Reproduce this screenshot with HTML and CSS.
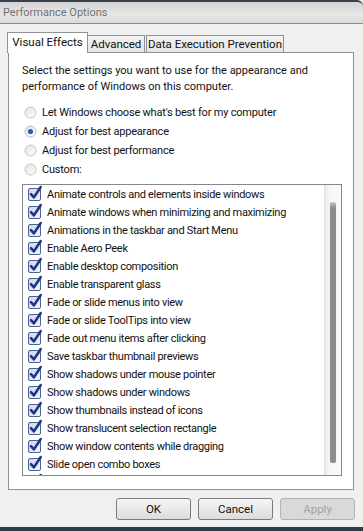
FILE: index.html
```html
<!DOCTYPE html>
<html lang="en">
<head>
  <meta charset="UTF-8" />
  <title>Performance Options</title>
  <link rel="stylesheet" href="styles.css">
</head>
<body>
  <svg class="defs" width="0" height="0">
    <defs>
      <linearGradient id="boxFill" x1="0" y1="0" x2="1" y2="1">
        <stop offset="0" stop-color="#c9d6ec"/>
        <stop offset="1" stop-color="#f4f7fc"/>
      </linearGradient>
      <linearGradient id="radioFill" x1="0" y1="0" x2="1" y2="1">
        <stop offset="0" stop-color="#e2e2e2"/>
        <stop offset="1" stop-color="#ffffff"/>
      </linearGradient>
      <symbol id="chk" viewBox="0 0 16 16">
        <rect x="1.5" y="3.5" width="12" height="12" rx="1.5" fill="url(#boxFill)" stroke="#4e6390"/>
        <path d="M4 9.2 L6.9 12.4 L13.6 2.2" fill="none" stroke="#1c3585" stroke-width="2.6" stroke-linecap="round" stroke-linejoin="round"/>
      </symbol>
      <symbol id="rad" viewBox="0 0 13 13">
        <circle cx="6.5" cy="6.5" r="5.5" fill="url(#radioFill)" stroke="#c4c4c4"/>
      </symbol>
      <symbol id="radOn" viewBox="0 0 13 13">
        <circle cx="6.5" cy="6.5" r="5.5" fill="url(#radioFill)" stroke="#b4bccb"/>
        <circle cx="6.5" cy="6.5" r="2.6" fill="#2a5db6"/>
      </symbol>
    </defs>
  </svg>

  <div class="window">
    <div class="titlebar">Performance Options</div>

    <div class="dialog">
      <div class="tabs">
        <div class="tab active">Visual Effects</div>
        <div class="tab adv">Advanced</div>
        <div class="tab dep">Data Execution Prevention</div>
      </div>

      <div class="panel">
        <p class="intro">Select the settings you want to use for the appearance and<br>performance of Windows on this computer.</p>

        <div class="radios">
          <div class="radio"><svg class="rbtn"><use href="#rad"/></svg>Let Windows choose what's best for my computer</div>
          <div class="radio"><svg class="rbtn"><use href="#radOn"/></svg>Adjust for best appearance</div>
          <div class="radio"><svg class="rbtn"><use href="#rad"/></svg>Adjust for best performance</div>
          <div class="radio"><svg class="rbtn"><use href="#rad"/></svg>Custom:</div>
        </div>

        <div class="listbox">
          <ul class="items">
            <li><svg class="cbox"><use href="#chk"/></svg>Animate controls and elements inside windows</li>
            <li><svg class="cbox"><use href="#chk"/></svg>Animate windows when minimizing and maximizing</li>
            <li><svg class="cbox"><use href="#chk"/></svg>Animations in the taskbar and Start Menu</li>
            <li><svg class="cbox"><use href="#chk"/></svg>Enable Aero Peek</li>
            <li><svg class="cbox"><use href="#chk"/></svg>Enable desktop composition</li>
            <li><svg class="cbox"><use href="#chk"/></svg>Enable transparent glass</li>
            <li><svg class="cbox"><use href="#chk"/></svg>Fade or slide menus into view</li>
            <li><svg class="cbox"><use href="#chk"/></svg>Fade or slide ToolTips into view</li>
            <li><svg class="cbox"><use href="#chk"/></svg>Fade out menu items after clicking</li>
            <li><svg class="cbox"><use href="#chk"/></svg>Save taskbar thumbnail previews</li>
            <li><svg class="cbox"><use href="#chk"/></svg>Show shadows under mouse pointer</li>
            <li><svg class="cbox"><use href="#chk"/></svg>Show shadows under windows</li>
            <li><svg class="cbox"><use href="#chk"/></svg>Show thumbnails instead of icons</li>
            <li><svg class="cbox"><use href="#chk"/></svg>Show translucent selection rectangle</li>
            <li><svg class="cbox"><use href="#chk"/></svg>Show window contents while dragging</li>
            <li><svg class="cbox"><use href="#chk"/></svg>Slide open combo boxes</li>
            <li><svg class="cbox"><use href="#chk"/></svg>Smooth edges of screen fonts</li>
          </ul>
          <div class="scrollbar"><div class="thumb"></div></div>
        </div>
      </div>

      <div class="buttons">
        <button class="button">OK</button>
        <button class="button">Cancel</button>
        <button class="button" disabled>Apply</button>
      </div>
    </div>
  </div>
</body>
</html>
```

FILE: styles.css
```css
body {
  margin: 0;
  font-family: "Roboto", "Liberation Sans", sans-serif;
  font-size: 11px;
  color: #111;
  background-color: #f0f0f0;
}

.defs {
  position: absolute;
  width: 0;
  height: 0;
}

.window {
  width: 363px;
  height: 531px;
  box-sizing: border-box;
  display: flex;
  flex-direction: column;
  background-color: #f0f0f0;
  border-bottom: 4px solid #2f3a4a;
  overflow: hidden;
}

.titlebar {
  height: 21px;
  line-height: 21px;
  padding-left: 3px;
  font-size: 11px;
  color: #737373;
  background: linear-gradient(#d4d4d4, #e6e6e6 60%, #dcdcdc);
  border-top: 2px solid #35404f;
  border-bottom: 1px solid #8a8a8a;
  border-top-right-radius: 6px;
}

.dialog {
  flex: 1;
  display: flex;
  flex-direction: column;
  padding: 8px 9px 7px 8px;
}

.tabs {
  position: relative;
  z-index: 1;
  display: flex;
  align-items: flex-end;
  height: 21px;
  margin-bottom: -1px;
  font-size: 11.5px;
}

.tab {
  box-sizing: border-box;
  height: 17px;
  margin-bottom: 1px;
  line-height: 16px;
  text-align: center;
  white-space: nowrap;
  background: linear-gradient(#f4f4f4, #e4e4e4);
  border: 1px solid #8e9196;
  border-bottom: none;
}

.tab.active {
  width: 81px;
  height: 21px;
  margin-left: -1px;
  margin-bottom: 0;
  line-height: 19px;
  background: #fff;
}

.tab.adv {
  width: 57px;
  border-left: none;
}

.tab.dep {
  width: 138px;
  margin-left: 1px;
}

.panel {
  box-sizing: border-box;
  height: 438px;
  padding: 10px 11px 0 13px;
  background-color: #fff;
  border: 1px solid #8e9196;
}

.intro {
  margin: 0;
  line-height: 16px;
}

.radios {
  margin-top: 8px;
  letter-spacing: -0.2px;
}

.radio {
  display: flex;
  align-items: center;
  height: 19px;
}

.rbtn {
  width: 13px;
  height: 13px;
  margin: 0 5px 0 2px;
}

.listbox {
  box-sizing: border-box;
  display: flex;
  height: 292px;
  margin-top: 5px;
  border: 1px solid #84878d;
}

.items {
  flex: 1;
  margin: 0;
  padding: 0 0 0 4px;
  list-style: none;
  letter-spacing: -0.3px;
  overflow: hidden;
}

.items li {
  display: flex;
  align-items: center;
  height: 18px;
  white-space: nowrap;
}

.cbox {
  width: 16px;
  height: 16px;
  margin: -2px 4px 0 0;
}

.scrollbar {
  width: 17px;
  box-sizing: border-box;
  padding: 17px 5px 12px 5px;
  background: linear-gradient(90deg, #e9e9e9, #f7f7f7 30%, #fafafa);
  border-left: 1px solid #e2e2e2;
}

.thumb {
  height: 100%;
  border-radius: 2px;
  background: linear-gradient(#c8c8c8, #8d8d8d 6px, #8d8d8d);
}

.buttons {
  display: flex;
  justify-content: flex-end;
  gap: 7px;
  margin: 8px -1px 0 0;
}

.button {
  width: 75px;
  height: 22px;
  padding: 0;
  font-family: inherit;
  font-size: 11.5px;
  line-height: 20px;
  color: #111;
  background: linear-gradient(#f6f6f6, #e9e9e9 50%, #dcdcdc);
  border: 1px solid #7b7b7b;
  border-radius: 3px;
}

.button:disabled {
  color: #a2a2a2;
  background: #d9d9d9;
  border-color: #b3b3b3;
}
```
